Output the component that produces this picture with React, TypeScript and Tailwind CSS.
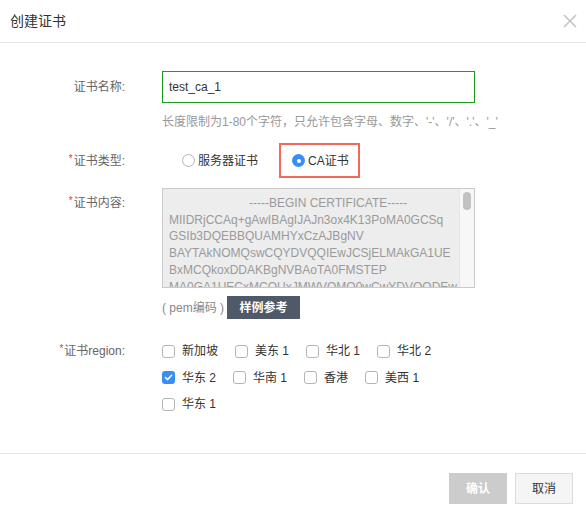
const regions = [
  { name: "新加坡", checked: false },
  { name: "美东 1", checked: false },
  { name: "华北 1", checked: false },
  { name: "华北 2", checked: false },
  { name: "华东 2", checked: true },
  { name: "华南 1", checked: false },
  { name: "香港", checked: false },
  { name: "美西 1", checked: false },
  { name: "华东 1", checked: false },
];

const certLines = [
  "MIIDRjCCAq+gAwIBAgIJAJn3ox4K13PoMA0GCSq",
  "GSIb3DQEBBQUAMHYxCzAJBgNV",
  "BAYTAkNOMQswCQYDVQQIEwJCSjELMAkGA1UE",
  "BxMCQkoxDDAKBgNVBAoTA0FMSTEP",
  "MA0GA1UECxMCQUxJMWVQMQ0wCwYDVQQDEw",
];

function Label({ text, required }: { text: string; required?: boolean }) {
  return (
    <div className="w-[125px] shrink-0 text-right text-[#666]">
      {required && <span className="relative -top-[3px] mr-px text-[10px] text-[#e33]">*</span>}
      {text}
    </div>
  );
}

function Radio({ checked, label }: { checked: boolean; label: string }) {
  return (
    <label className="flex items-center gap-[3px] text-[#333]">
      {checked ? (
        <span className="flex size-[13px] items-center justify-center rounded-full bg-[#3a8ef0]">
          <span className="size-[4px] rounded-full bg-white" />
        </span>
      ) : (
        <span className="size-[13px] rounded-full border border-[#b5b5b5] bg-white" />
      )}
      <span>{label}</span>
    </label>
  );
}

function Checkbox({ checked, label }: { checked: boolean; label: string }) {
  return (
    <label className="flex h-[26.5px] items-center gap-[7px] text-[#333]">
      {checked ? (
        <span className="flex size-[13px] items-center justify-center rounded-[3px] bg-[#3a8ef0]">
          <svg width="9" height="9" viewBox="0 0 9 9" fill="none">
            <path d="M1.5 4.6 3.6 6.6 7.6 2.2" stroke="white" strokeWidth="1.5" strokeLinecap="round" strokeLinejoin="round" />
          </svg>
        </span>
      ) : (
        <span className="size-[13px] rounded-[3px] border border-[#b5b5b5] bg-white" />
      )}
      <span>{label}</span>
    </label>
  );
}

export default function App() {
  return (
    <div className="flex h-[516px] w-full flex-col bg-white text-[12px] text-[#333] font-['Liberation_Sans','Noto_Sans_CJK_SC',sans-serif]">
      <div className="flex h-[43px] shrink-0 items-center justify-between border-b border-[#e5e5e5] pl-[10px] pr-[8px]">
        <span className="text-[14px] text-[#333]">创建证书</span>
        <button type="button" aria-label="关闭" className="p-px">
          <svg width="14" height="14" viewBox="0 0 14 14">
            <path d="M1 1 13 13M13 1 1 13" stroke="#c4c4c4" strokeWidth="1.6" />
          </svg>
        </button>
      </div>

      <div className="flex-1 pt-[28px]">
        <div className="flex h-[32px] items-center">
          <Label text="证书名称:" />
          <div className="ml-[37px] flex h-[32px] w-[313px] items-center border border-[#1c9c1c] px-[6px] text-[12px] text-[#333]">
            test_ca_1
          </div>
        </div>
        <div className="ml-[162px] mt-[11px] leading-[16px] text-[#999]">
          长度限制为1-80个字符，只允许包含字母、数字、'-'、'/'、'.'、'_'
        </div>

        <div className="mt-[13px] flex h-[35px] items-center">
          <Label text="证书类型:" required />
          <div className="ml-[57px] flex items-center">
            <Radio checked={false} label="服务器证书" />
            <div className="ml-[21px] flex h-[35px] items-center border-2 border-[#f2685a] pl-[11px] pr-[9px]">
              <Radio checked label="CA证书" />
            </div>
          </div>
        </div>

        <div className="mt-[10px] flex">
          <div className="pt-[7px] leading-[16.7px]">
            <Label text="证书内容:" required />
          </div>
          <div className="relative ml-[37px] h-[100px] w-[313px] overflow-hidden border border-[#cacaca] bg-[#ededed] pl-[6px] pr-[18px] pt-[6px] text-[12px] leading-[16.7px] text-[#9a9a9a]">
            <div className="whitespace-nowrap pl-[80px]">-----BEGIN CERTIFICATE-----</div>
            {certLines.map((line) => (
              <div key={line} className="whitespace-nowrap">
                {line}
              </div>
            ))}
            <div className="absolute inset-y-0 right-0 w-[15px] border-l border-[#e6e6e6] bg-[#f7f7f7]">
              <div className="mx-auto mt-[3px] h-[18px] w-[8px] rounded-full bg-[#c2c2c2]" />
            </div>
          </div>
        </div>

        <div className="ml-[162px] mt-[8px] flex items-center gap-[3px]">
          <span className="text-[#888]">( pem编码 )</span>
          <button type="button" className="h-[23px] w-[73px] bg-[#4f5968] font-bold text-white">
            样例参考
          </button>
        </div>

        <div className="mt-[19px] flex">
          <div className="leading-[26.5px]">
            <Label text="证书region:" required />
          </div>
          <div className="ml-[37px] flex w-[280px] flex-wrap gap-x-[17px]">
            {regions.map((r) => (
              <Checkbox key={r.name} checked={r.checked} label={r.name} />
            ))}
          </div>
        </div>
      </div>

      <div className="flex h-[63px] shrink-0 justify-end gap-[8px] border-t border-[#e5e5e5] pr-[13px] pt-[19px]">
        <button type="button" className="h-[31px] w-[58px] bg-[#cccccc] font-bold text-white">
          确认
        </button>
        <button type="button" className="h-[31px] w-[58px] border border-[#dcdcdc] bg-[#f5f5f5] text-[#333]">
          取消
        </button>
      </div>
    </div>
  );
}
